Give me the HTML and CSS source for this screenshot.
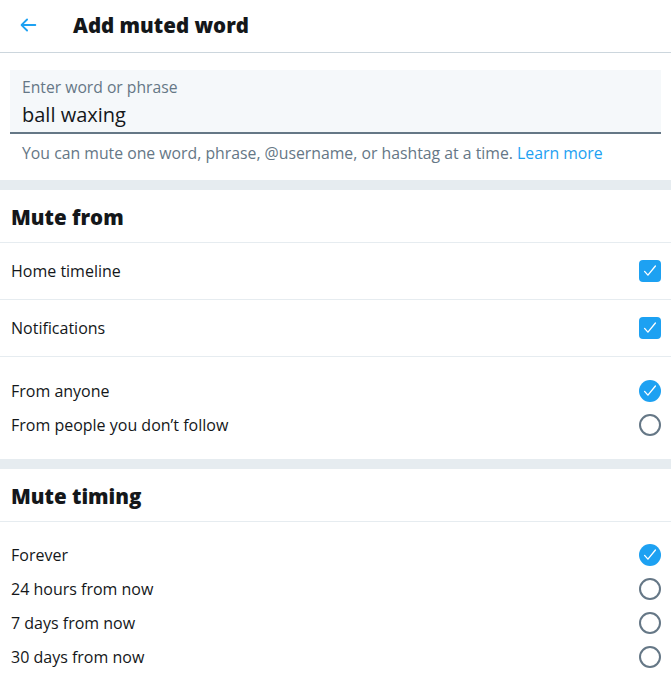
FILE: index.html
```html
<!DOCTYPE html>
<html>
<head>
<meta charset="utf-8">
<link rel="stylesheet" href="styles.css">
</head>
<body>
<header class="topbar">
  <div class="back">
    <svg viewBox="0 0 24 24" width="22" height="22"><path d="M20 11H7.414l4.293-4.293a1 1 0 0 0-1.414-1.414l-6 6a1 1 0 0 0 0 1.414l6 6a1 1 0 0 0 1.414-1.414L7.414 13H20a1 1 0 0 0 0-2z" fill="#1da1f2"/></svg>
  </div>
  <h1 class="title">Add muted word</h1>
</header>
<section class="entry">
  <div class="field">
    <div class="label">Enter word or phrase</div>
    <div class="value">ball waxing</div>
  </div>
  <p class="help">You can mute one word, phrase, @username, or hashtag at a time. <a class="link">Learn more</a></p>
</section>
<div class="band"></div>
<section class="group">
  <h2 class="heading">Mute from</h2>
  <div class="row"><span>Home timeline</span><span class="check"><svg viewBox="0 0 24 24" width="20" height="20"><path d="M5.5 12.5l4 4.5L18.5 6" fill="none" stroke="#fff" stroke-width="1.6" stroke-linecap="round" stroke-linejoin="round"/></svg></span></div>
  <div class="row"><span>Notifications</span><span class="check"><svg viewBox="0 0 24 24" width="20" height="20"><path d="M5.5 12.5l4 4.5L18.5 6" fill="none" stroke="#fff" stroke-width="1.6" stroke-linecap="round" stroke-linejoin="round"/></svg></span></div>
  <div class="options">
    <div class="opt"><span>From anyone</span><span class="radio on"><svg viewBox="0 0 24 24" width="20" height="20"><path d="M5.5 12.5l4 4.5L18.5 6" fill="none" stroke="#fff" stroke-width="1.6" stroke-linecap="round" stroke-linejoin="round"/></svg></span></div>
    <div class="opt"><span>From people you don’t follow</span><span class="radio"></span></div>
  </div>
</section>
<div class="band"></div>
<section class="group">
  <h2 class="heading">Mute timing</h2>
  <div class="options timing">
    <div class="opt"><span>Forever</span><span class="radio on"><svg viewBox="0 0 24 24" width="20" height="20"><path d="M5.5 12.5l4 4.5L18.5 6" fill="none" stroke="#fff" stroke-width="1.6" stroke-linecap="round" stroke-linejoin="round"/></svg></span></div>
    <div class="opt"><span>24 hours from now</span><span class="radio"></span></div>
    <div class="opt"><span>7 days from now</span><span class="radio"></span></div>
    <div class="opt"><span>30 days from now</span><span class="radio"></span></div>
  </div>
</section>
</body>
</html>
```
FILE: styles.css
```css
* { box-sizing: border-box; }
body {
  margin: 0;
  font-family: "Open Sans", "Noto Sans", sans-serif;
  color: #14171a;
  background: #fff;
}
.topbar {
  height: 53px;
  display: flex;
  align-items: center;
  border-bottom: 1px solid #ccd6dd;
  padding: 0 0 3px 17px;
}
.back { width: 56px; display: flex; align-items: center; }
.back svg { display: block; }
.title {
  margin: 0;
  font-size: 20.5px;
  font-weight: 800;
}
.entry { padding: 17px 10px 0 10px; height: 127px; }
.field {
  background: #f5f8fa;
  border-bottom: 2px solid #657786;
  height: 64px;
  padding: 6px 12px 0 12px;
}
.label { font-size: 15.7px; color: #657786; line-height: 22px; }
.value { font-size: 20px; line-height: 30px; color: #14171a; padding-top: 2px; }
.help {
  margin: 0;
  padding: 8px 12px 0 12px;
  font-size: 15.8px;
  color: #657786;
  line-height: 22px;
}
.link { color: #1da1f2; }
.band { height: 10px; background: #e6ecf0; }
.heading {
  margin: 0;
  font-size: 20.5px;
  font-weight: 800;
  height: 53px;
  display: flex;
  align-items: center;
  padding: 1px 11px 0 11px;
  border-bottom: 1px solid #e6ecf0;
}
.row {
  height: 57px;
  display: flex;
  align-items: center;
  justify-content: space-between;
  padding: 0 10px 0 11px;
  border-bottom: 1px solid #e6ecf0;
  font-size: 16px;
}
.options { padding: 17px 0 17px 0; }
.options.timing { padding-top: 16px; }
.opt {
  height: 34px;
  display: flex;
  align-items: center;
  justify-content: space-between;
  padding: 0 10px 0 11px;
  font-size: 16px;
}
.check, .radio {
  width: 22px;
  height: 22px;
  display: flex;
  align-items: center;
  justify-content: center;
  flex: none;
}
.check { background: #1da1f2; border-radius: 4px; }
.radio { border: 2px solid #657786; border-radius: 50%; }
.radio.on { background: #1da1f2; border: none; }
```
